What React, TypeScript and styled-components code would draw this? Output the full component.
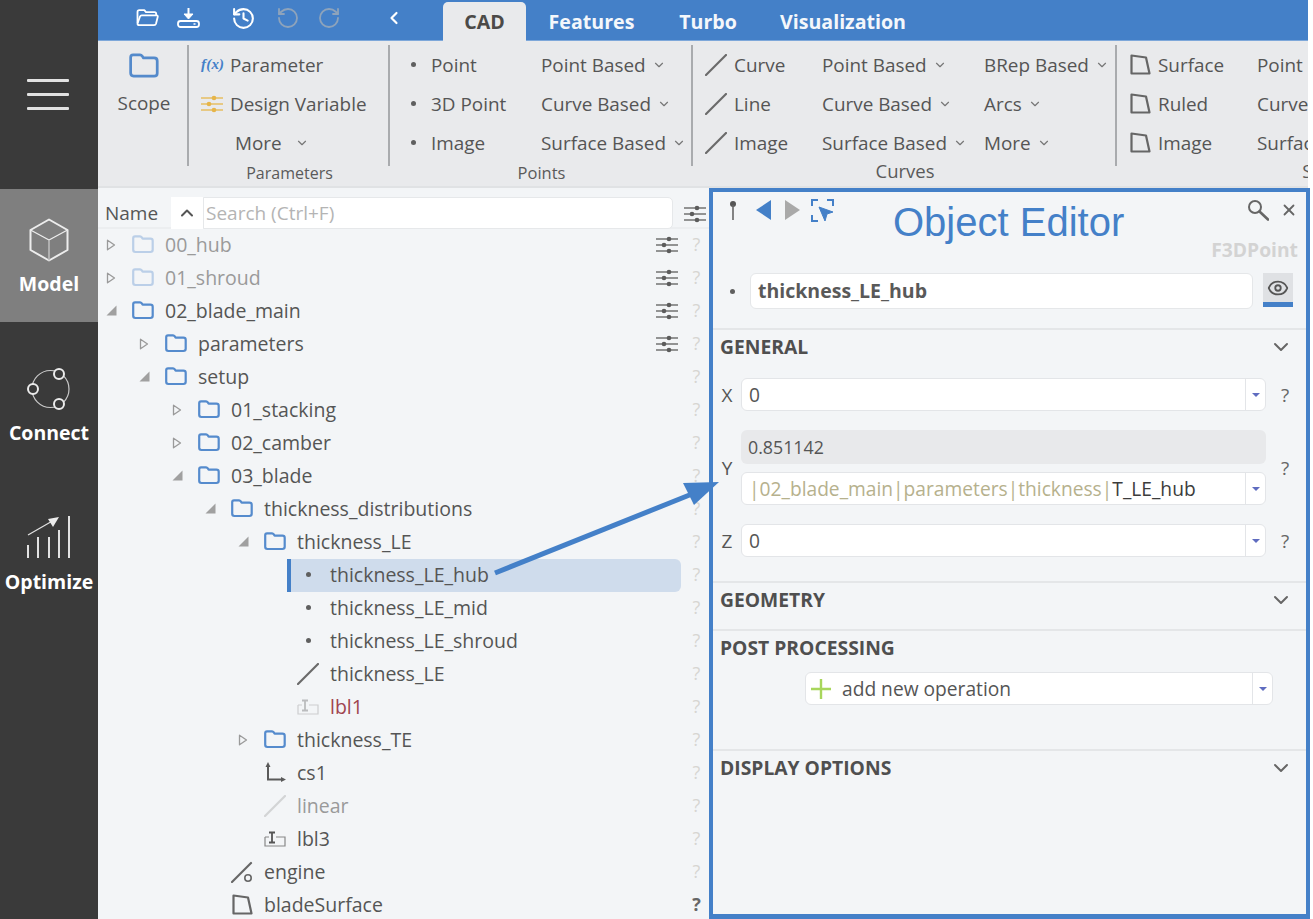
import React from "react";
import styled, { createGlobalStyle } from "styled-components";
import { ChevronDown, ChevronLeft, ChevronUp, Eye, History, RotateCcw, RotateCw, X } from "lucide-react";

const BLUE = "#4480c8";
const FONT = `"Open Sans", "Noto Sans", sans-serif`;

const Global = createGlobalStyle`
  html, body { margin: 0; padding: 0; height: 100%; overflow: hidden; background: #fff; }
  body { font-family: ${FONT}; color: #555; }
  * { box-sizing: border-box; }
`;

const Page = styled.div`
  position: relative;
  display: grid;
  grid-template-columns: 98px 1212px;
  width: 1310px;
  height: 919px;
  overflow: hidden;
`;

/* ---------- left rail ---------- */
const Rail = styled.nav`
  display: flex;
  flex-direction: column;
  gap: 16px;
  background: #3a3a3a;
  height: 919px;
`;
const RailTop = styled.div`
  height: 189px;
  margin-bottom: -16px;
  padding-top: 79px;
  padding-left: 27px;
  display: flex;
  flex-direction: column;
  gap: 11px;
`;
const BurgerLine = styled.span`
  display: block;
  width: 42px;
  height: 3px;
  background: #e2e2e2;
  border-radius: 1px;
`;
const RailItem = styled.div<{ $active?: boolean }>`
  height: 133px;
  padding-top: 29px;
  display: flex;
  flex-direction: column;
  align-items: center;
  gap: 10px;
  background: ${(p) => (p.$active ? "#7f7f7f" : "transparent")};
  color: #fff;
  font-size: 19.5px;
  font-weight: 700;
  line-height: 24px;
  svg { display: block; flex-shrink: 0; }
`;

/* ---------- main column ---------- */
const Main = styled.div`
  display: flex;
  flex-direction: column;
  min-width: 0;
  height: 919px;
`;
const TopBar = styled.header`
  display: flex;
  align-items: center;
  height: 41px;
  width: 1210px;
  background: ${BLUE};
  border-bottom: 1px solid #7ea8da;
`;
const QuickIcons = styled.div`
  display: flex;
  align-items: center;
  width: 345px;
  height: 40px;
  padding: 0 0 4px 37px;
`;
const QuickSlot = styled.span<{ $w: number }>`
  display: flex;
  justify-content: center;
  align-items: center;
  flex: 0 0 ${(p) => p.$w}px;
  color: #fff;
  svg { display: block; }
`;
const Tab = styled.div<{ $active?: boolean; $w: number }>`
  display: flex;
  justify-content: center;
  align-items: center;
  align-self: flex-end;
  width: ${(p) => p.$w}px;
  height: 39px;
  margin-bottom: -1px;
  font-size: 19.6px;
  font-weight: 700;
  color: ${(p) => (p.$active ? "#4c4a48" : "#f4f7fb")};
  background: ${(p) => (p.$active ? "#e9eaec" : "transparent")};
  border-radius: 5px 5px 0 0;
`;

const Ribbon = styled.section`
  display: flex;
  width: 1210px;
  height: 147px;
  flex-shrink: 0;
  background: #e9eaec;
  border-bottom: 2px solid #e0e2e4;
  overflow: hidden;
`;
const Group = styled.div<{ $w: number }>`
  flex: 0 0 ${(p) => p.$w}px;
  display: flex;
  flex-direction: column;
  padding-top: 4px;
`;
const GroupBody = styled.div<{ $cols: string; $pad: number; $sep?: boolean }>`
  display: grid;
  grid-template-columns: ${(p) => p.$cols};
  grid-auto-rows: 39px;
  padding: 0 0 0 ${(p) => p.$pad}px;
  height: 121px;
  border-right: ${(p) => (p.$sep === false ? "0" : "2px solid #a9abae")};
  align-content: start;
  white-space: nowrap;
`;
const Caption = styled.div<{ $size?: number; $lift?: number }>`
  text-align: center;
  font-size: ${(p) => p.$size ?? 16}px;
  line-height: 16px;
  margin-top: ${(p) => -1 - (p.$lift ?? 0)}px;
  color: #5a5a5a;
`;
const RibbonItem = styled.div<{ $indent?: number }>`
  display: flex;
  align-items: center;
  height: 39px;
  font-size: 18.9px;
  color: #555;
  padding-left: ${(p) => p.$indent ?? 0}px;
`;
const RibbonIcon = styled.span<{ $w: number }>`
  display: inline-flex;
  justify-content: flex-start;
  align-items: center;
  width: ${(p) => p.$w}px;
  flex-shrink: 0;
`;
const Dot = styled.span`
  display: inline-block;
  width: 5px;
  height: 5px;
  border-radius: 50%;
  background: #5f5f5f;
`;
const Caret = styled(ChevronDown)<{ $gap?: number }>`
  margin-left: ${(p) => p.$gap ?? 6}px;
  color: #777;
`;
const Fx = styled.span`
  font-family: "Liberation Serif", serif;
  font-style: italic;
  font-weight: 700;
  font-size: 15px;
  color: ${BLUE};
  letter-spacing: 0.2px;
`;
const ScopeCell = styled.div`
  grid-row: span 3;
  display: flex;
  flex-direction: column;
  align-items: center;
  padding-top: 8px;
  gap: 12px;
  font-size: 18.9px;
  color: #555;
  line-height: 26px;
  svg { display: block; flex-shrink: 0; }
`;

/* ---------- workspace ---------- */
const Work = styled.div`
  flex: 1;
  display: grid;
  grid-template-columns: 611px 601px;
  min-height: 0;
`;

const TreePanel = styled.div`
  background: #f3f5f7;
  overflow: hidden;
  height: 731px;
`;
const TreeHead = styled.div`
  display: flex;
  align-items: flex-start;
  height: 41px;
  border-bottom: 2px solid #eceef0;
  padding: 9px 0 0 7px;
  font-size: 19px;
`;
const HeadName = styled.span`
  width: 66px;
  line-height: 33px;
  color: #555;
`;
const SortButton = styled.span`
  display: flex;
  align-items: center;
  justify-content: center;
  width: 32px;
  height: 32px;
  background: #fff;
  color: #555;
`;
const SearchBox = styled.div`
  width: 470px;
  height: 32px;
  line-height: 30px;
  background: #fff;
  border: 1px solid #e6e8ea;
  border-radius: 0 5px 5px 0;
  padding-left: 2px;
  color: #b4b4b4;
  font-size: 19px;
`;
const HeadTool = styled.span`
  margin-left: 11px;
  margin-top: 8px;
  display: flex;
`;

const Row = styled.div`
  display: flex;
  height: 33px;
  font-size: 19.5px;
`;
const RowMain = styled.div<{ $depth: number; $selected?: boolean }>`
  flex: 1;
  display: flex;
  align-items: center;
  min-width: 0;
  white-space: nowrap;
  margin-left: ${(p) => (p.$selected ? 189 : 6 + p.$depth * 33)}px;
  padding-left: ${(p) => (p.$selected ? 6 : 0)}px;
  padding-right: 2px;
  padding-bottom: 2px;
  background: ${(p) => (p.$selected ? "#cfdcec" : "transparent")};
  border-left: ${(p) => (p.$selected ? `4px solid ${BLUE}` : "0")};
  border-radius: ${(p) => (p.$selected ? "0 6px 6px 0" : "0")};
`;
const ArrowSlot = styled.span`
  flex: 0 0 28px;
  display: flex;
  align-items: center;
  padding-left: 2px;
`;
const IconSlot = styled.span<{ $faded?: boolean }>`
  flex: 0 0 22px;
  display: flex;
  align-items: center;
  justify-content: center;
  margin-right: 11px;
  opacity: ${(p) => (p.$faded ? 0.35 : 1)};
`;
const RowName = styled.span<{ $tone?: "muted" | "alert" }>`
  flex: 1;
  color: ${(p) => (p.$tone === "muted" ? "#9a9a9a" : p.$tone === "alert" ? "#a0444f" : "#555")};
`;
const ToolSlot = styled.span`
  flex: 0 0 24px;
  display: flex;
  justify-content: center;
`;
const Help = styled.span<{ $strong?: boolean }>`
  flex: 0 0 28px;
  padding-left: 4px;
  padding-right: 1px;
  text-align: center;
  line-height: 31px;
  font-size: 18px;
  font-weight: ${(p) => (p.$strong ? 700 : 400)};
  color: ${(p) => (p.$strong ? "#666" : "#d7d5d2")};
`;

/* ---------- editor ---------- */
const Editor = styled.aside`
  background: #f3f5f7;
  border: 4px solid ${BLUE};
  border-bottom-width: 5px;
  height: 731px;
  overflow: hidden;
`;
const EditorHead = styled.div`
  height: 136px;
  display: flex;
  flex-direction: column;
`;
const EditorTools = styled.div`
  display: flex;
  align-items: center;
  height: 36px;
  padding-left: 15px;
  gap: 10px;
  svg { display: block; flex-shrink: 0; }
`;
const PinSlot = styled.span`
  display: flex;
  margin-right: 7px;
`;
const EditorToolsEnd = styled.span`
  margin-left: auto;
  display: flex;
  align-items: center;
  gap: 11px;
  padding-right: 8px;
  color: #666;
`;
const TypeTag = styled.div`
  height: 29px;
  margin-top: 7px;
  text-align: right;
  padding-right: 8px;
  font-size: 19.3px;
  font-weight: 700;
  color: #d3d3d3;
  line-height: 29px;
`;
const NameRow = styled.div`
  display: flex;
  align-items: flex-start;
  margin-top: 9px;
  padding-left: 17px;
`;
const NameDotSlot = styled.span`
  width: 20px;
  height: 36px;
  display: flex;
  align-items: center;
`;
const NameInput = styled.div`
  width: 503px;
  height: 36px;
  line-height: 34px;
  background: #fff;
  border: 1px solid #e5e7e9;
  border-radius: 6px;
  padding-left: 7px;
  font-size: 19.5px;
  font-weight: 700;
  color: #595959;
`;
const EyeButton = styled.span`
  width: 30px;
  height: 34px;
  margin-left: 10px;
  display: flex;
  align-items: center;
  justify-content: center;
  background: #dfe1e4;
  border-bottom: 5px solid ${BLUE};
  color: #555;
`;

const Section = styled.section<{ $h: number }>`
  height: ${(p) => p.$h}px;
  border-top: 2px solid #e4e6e8;
`;
const SectionHead = styled.div`
  display: flex;
  align-items: center;
  justify-content: space-between;
  height: 33px;
  padding: 0 13px 0 7px;
  font-size: 19.3px;
  font-weight: 700;
  color: #4f4f4f;
  line-height: 33px;
  text-transform: uppercase;
  svg { color: #666; }
`;
const FieldList = styled.div`
  display: flex;
  flex-direction: column;
  gap: 19px;
  margin-top: 15px;
`;
const FieldRow = styled.div`
  display: grid;
  grid-template-columns: 28px 525px 38px;
  align-items: center;
  font-size: 19px;
`;
const FieldLabel = styled.span`
  text-align: center;
  color: #555;
`;
const FieldStack = styled.div`
  display: flex;
  flex-direction: column;
  gap: 8px;
`;
const FieldHelp = styled.span`
  text-align: center;
  color: #666;
`;
const Combo = styled.div<{ $w?: number; $left?: number }>`
  display: flex;
  width: ${(p) => (p.$w ? `${p.$w}px` : "100%")};
  margin-left: ${(p) => p.$left ?? 0}px;
  height: 33px;
  background: #fff;
  border: 1px solid #e3e5e8;
  border-radius: 6px;
  font-size: 19.2px;
  color: #555;
`;
const ComboText = styled.div`
  flex: 1;
  display: flex;
  align-items: center;
  padding-left: 7px;
  white-space: nowrap;
  color: #555;
`;
const ComboButton = styled.span`
  flex: 0 0 20px;
  border-left: 1px solid #e3e5e8;
  display: flex;
  align-items: center;
  justify-content: center;
  &::before {
    content: "";
    border-left: 4px solid transparent;
    border-right: 4px solid transparent;
    border-top: 4px solid #5f6cc0;
  }
`;
const ReadOnly = styled.div`
  height: 34px;
  line-height: 34px;
  background: #e8e9eb;
  border-radius: 6px;
  padding-left: 7px;
  font-size: 17.8px;
  color: #555;
`;
const PathMuted = styled.span`
  color: #b6b18d;
`;
const PathStrong = styled.span`
  color: #3c3c3c;
`;
const PlusSlot = styled.span`
  display: flex;
  margin-right: 10px;
  margin-left: -3px;
`;
const AddList = styled.div`
  margin-top: 8px;
`;

/* ---------- annotation overlay ---------- */
const Annotation = styled.div`
  position: absolute;
  left: 893px;
  top: 198px;
  font-family: "Liberation Sans", Arial, sans-serif;
  font-size: 40px;
  line-height: 48px;
  color: ${BLUE};
  white-space: nowrap;
`;
const ArrowOverlay = styled.svg`
  position: absolute;
  left: 0;
  top: 0;
  width: 1310px;
  height: 919px;
  pointer-events: none;
`;

/* ---------- drawn icons ---------- */
const FolderIcon = ({ size = 22, stroke = 2.2 }: { size?: number; stroke?: number }) => (
  <svg width={size} height={size * 0.82} viewBox="0 0 22 18" fill="none">
    <path
      d="M1.200 5.600V3.200C1.200 2 2 1.300 3 1.300h5.100c.8 0 1.200.4 1.700 1.100l.8 1.200h7.800c1.500 0 2.300.9 2.300 2.200v9c0 1.400-.9 2.200-2.300 2.200H3.400C2 16.900 1.200 16 1.200 14.700V5.600z"
      stroke={BLUE}
      strokeOpacity={0.9}
      strokeWidth={stroke}
      strokeLinejoin="round"
    />
  </svg>
);
const ArrowOpen = () => (
  <svg width="10" height="12" viewBox="0 0 10 12" fill="none">
    <path d="M1.500 1.200 8.500 6 1.500 10.800z" stroke="#9a9a9a" strokeWidth="1.300" strokeLinejoin="round" />
  </svg>
);
const ArrowDown = () => (
  <svg width="11" height="11" viewBox="0 0 11 11">
    <path d="M10.500 .5v10H.5z" fill="#a0a0a0" />
  </svg>
);
const SlidersIcon = ({ color = "#5c5c5c" }: { color?: string }) => (
  <svg width="22" height="18" viewBox="0 0 22 18" fill="none">
    <path d="M0 3h22M0 9h22M0 15h22" stroke={color} strokeWidth="1.400" opacity="0.85" />
    <circle cx="13" cy="3" r="2.300" fill={color} />
    <circle cx="8" cy="9" r="2.300" fill={color} />
    <circle cx="13" cy="15" r="2.300" fill={color} />
  </svg>
);
const SlashIcon = ({ color = "#6a6a6a", w = 2.2 }: { color?: string; w?: number }) => (
  <svg width="22" height="22" viewBox="0 0 22 22" fill="none">
    <path d="M1 21 21 1" stroke={color} strokeWidth={w} strokeLinecap="round" />
  </svg>
);
const SurfaceIcon = ({ size = 21 }: { size?: number }) => (
  <svg width={size} height={size} viewBox="0 0 21 21" fill="none">
    <path d="M1.500 1.500 16 3.500 19.500 19.500H1.500z" stroke="#666" strokeWidth="2.200" strokeLinejoin="round" />
  </svg>
);
const LabelIcon = () => (
  <svg width="22" height="16" viewBox="0 0 22 16" fill="none">
    <path d="M1 6h4M12 6h9v9H1V6" stroke="#888" strokeWidth="1.200" />
    <path d="M5 1.500h6M8 1.500v10M5 11.500h6" stroke="#555" strokeWidth="1.800" />
  </svg>
);
const AxesIcon = () => (
  <svg width="22" height="22" viewBox="0 0 22 22" fill="none">
    <path d="M4 3v14.500h15" stroke="#5a5a5a" strokeWidth="2" />
    <path d="M4 0 1.500 5h5zM22 17.500 17 15v5z" fill="#5a5a5a" />
  </svg>
);
const EngineIcon = () => (
  <svg width="22" height="22" viewBox="0 0 22 22" fill="none">
    <path d="M1 21 20 2" stroke="#666" strokeWidth="2.200" strokeLinecap="round" />
    <circle cx="17" cy="17" r="3.200" stroke="#666" strokeWidth="1.600" />
  </svg>
);
const OpenFolder = () => (
  <svg width="23" height="18" viewBox="0 0 23 18" fill="none" stroke="#fff" strokeWidth="1.800" strokeLinejoin="round">
    <path d="M1.500 14V3c0-1 .7-1.800 1.800-1.800h5l1.700 2h8.500c1 0 1.700.7 1.700 1.700v1" />
    <path d="M1.500 14.500 4 7.500c.3-.8.900-1.200 1.700-1.200H20.500c1 0 1.500.8 1.200 1.700L20 14.800c-.3.900-1 1.400-1.900 1.400H3.300c-1 0-1.800-.7-1.800-1.700z" />
  </svg>
);
const SaveDrive = () => (
  <svg width="23" height="20" viewBox="0 0 23 20" fill="none" stroke="#fff">
    <path d="M11.500 0v9" strokeWidth="2" />
    <path d="M7 6l4.500 5L16 6z" fill="#fff" strokeWidth="1" />
    <rect x="1" y="13" width="21" height="6" rx="2.500" strokeWidth="1.800" />
    <path d="M16.500 16h2" strokeWidth="1.500" />
  </svg>
);
const PinIcon = () => (
  <svg width="10" height="22" viewBox="0 0 10 22">
    <circle cx="5" cy="5" r="3" fill="#555" />
    <path d="M5 6v15" stroke="#666" strokeWidth="1.600" />
  </svg>
);
const TriLeft = ({ color }: { color: string }) => (
  <svg width="18" height="22" viewBox="0 0 18 22">
    <path d="M16 1v20L1 11z" fill={color} />
  </svg>
);
const TriRight = ({ color }: { color: string }) => (
  <svg width="18" height="22" viewBox="0 0 18 22">
    <path d="M2 1v20l15-10z" fill={color} />
  </svg>
);
const SelectIcon = () => (
  <svg width="23" height="23" viewBox="0 0 23 23" fill="none" stroke={BLUE} strokeWidth="2">
    <path d="M1 7V1h6M16 1h6v6M1 16v6h6" />
    <path d="M8 8 22 13l-6 2-2 7z" fill={BLUE} strokeWidth="1" />
  </svg>
);
const SearchGlyph = () => (
  <svg width="22" height="22" viewBox="0 0 22 22" fill="none" stroke="#666">
    <circle cx="8" cy="8" r="6" strokeWidth="2" />
    <path d="M12.500 12.500 21 20.500" strokeWidth="2.600" strokeLinecap="round" />
  </svg>
);
const CubeIcon = () => (
  <svg width="40" height="44" viewBox="0 0 40 44" fill="none" stroke="#ededed" strokeLinejoin="round">
    <path d="M20 1.500 38.500 12v20L20 42.500 1.500 32V12z" strokeWidth="2" />
    <path d="M1.500 12 20 22l18.500-10" strokeWidth="1.300" />
    <path d="M20 22v20.500" strokeWidth="1.600" stroke="#bdbdbd" />
  </svg>
);
const ConnectIcon = () => (
  <svg width="44" height="44" viewBox="0 0 44 44" fill="none">
    <circle cx="23.500" cy="22" r="18.500" stroke="#c9c9c9" strokeWidth="1.200" />
    <circle cx="32" cy="7" r="5" fill="#3a3a3a" stroke="#ececec" strokeWidth="2" />
    <circle cx="6" cy="22" r="5" fill="#3a3a3a" stroke="#ececec" strokeWidth="2" />
    <circle cx="32" cy="37" r="5" fill="#3a3a3a" stroke="#ececec" strokeWidth="2" />
  </svg>
);
const OptimizeIcon = () => (
  <svg width="46" height="44" viewBox="0 0 46 44" fill="none" stroke="#e2e2e2">
    <path d="M2 19 29 3.500" strokeWidth="1.200" />
    <path d="M33 1 22 3l5 8z" fill="#ececec" strokeWidth="0" />
    <path d="M2 29v13M12 21v21M23 21v21M33 14v28M43 0v42" strokeWidth="2" />
  </svg>
);
const PlusIcon = () => (
  <svg width="22" height="22" viewBox="0 0 22 22">
    <path d="M11 1v20M1 11h20" stroke="#a8d65c" strokeWidth="2.400" />
  </svg>
);

/* ---------- data ---------- */
type Kind = "folder" | "dot" | "slash" | "label" | "axes" | "engine" | "surface";
interface TreeRow {
  name: string;
  depth: number;
  kind: Kind;
  arrow?: "open" | "down";
  faded?: boolean;
  tone?: "muted" | "alert";
  tools?: boolean;
  selected?: boolean;
  strongHelp?: boolean;
}
const rows: TreeRow[] = [
  { name: "00_hub", depth: 0, kind: "folder", arrow: "open", faded: true, tone: "muted", tools: true },
  { name: "01_shroud", depth: 0, kind: "folder", arrow: "open", faded: true, tone: "muted", tools: true },
  { name: "02_blade_main", depth: 0, kind: "folder", arrow: "down", tools: true },
  { name: "parameters", depth: 1, kind: "folder", arrow: "open", tools: true },
  { name: "setup", depth: 1, kind: "folder", arrow: "down" },
  { name: "01_stacking", depth: 2, kind: "folder", arrow: "open" },
  { name: "02_camber", depth: 2, kind: "folder", arrow: "open" },
  { name: "03_blade", depth: 2, kind: "folder", arrow: "down" },
  { name: "thickness_distributions", depth: 3, kind: "folder", arrow: "down" },
  { name: "thickness_LE", depth: 4, kind: "folder", arrow: "down" },
  { name: "thickness_LE_hub", depth: 5, kind: "dot", selected: true },
  { name: "thickness_LE_mid", depth: 5, kind: "dot" },
  { name: "thickness_LE_shroud", depth: 5, kind: "dot" },
  { name: "thickness_LE", depth: 5, kind: "slash" },
  { name: "lbl1", depth: 5, kind: "label", faded: true, tone: "alert" },
  { name: "thickness_TE", depth: 4, kind: "folder", arrow: "open" },
  { name: "cs1", depth: 4, kind: "axes" },
  { name: "linear", depth: 4, kind: "slash", faded: true, tone: "muted" },
  { name: "lbl3", depth: 4, kind: "label" },
  { name: "engine", depth: 3, kind: "engine" },
  { name: "bladeSurface", depth: 3, kind: "surface", strongHelp: true },
];

const kindIcon = (r: TreeRow) => {
  switch (r.kind) {
    case "folder": return <FolderIcon />;
    case "dot": return <Dot />;
    case "slash": return <SlashIcon color={r.faded ? "#999" : "#6a6a6a"} />;
    case "label": return <LabelIcon />;
    case "axes": return <AxesIcon />;
    case "engine": return <EngineIcon />;
    case "surface": return <SurfaceIcon />;
  }
};

const More = ({ children, indent, gap }: { children: React.ReactNode; indent?: number; gap?: number }) => (
  <RibbonItem $indent={indent}>
    {children}
    <Caret size={14} strokeWidth={2} $gap={gap} />
  </RibbonItem>
);
const Iconed = ({ icon, w, children }: { icon: React.ReactNode; w: number; children: React.ReactNode }) => (
  <RibbonItem>
    <RibbonIcon $w={w}>{icon}</RibbonIcon>
    {children}
  </RibbonItem>
);

const Field = ({ label, children }: { label: string; children: React.ReactNode }) => (
  <FieldRow>
    <FieldLabel>{label}</FieldLabel>
    {children}
    <FieldHelp>?</FieldHelp>
  </FieldRow>
);

export default function App() {
  return (
    <Page>
      <Global />
      <Rail>
        <RailTop>
          <BurgerLine />
          <BurgerLine />
          <BurgerLine />
        </RailTop>
        <RailItem $active>
          <CubeIcon />
          Model
        </RailItem>
        <RailItem>
          <ConnectIcon />
          Connect
        </RailItem>
        <RailItem>
          <OptimizeIcon />
          Optimize
        </RailItem>
      </Rail>

      <Main>
        <TopBar>
          <QuickIcons>
            <QuickSlot $w={24}><OpenFolder /></QuickSlot>
            <QuickSlot $w={58}><SaveDrive /></QuickSlot>
            <QuickSlot $w={52}><History size={25} strokeWidth={2} /></QuickSlot>
            <QuickSlot $w={38}><RotateCcw size={24} strokeWidth={1.8} color="#8ea3bb" /></QuickSlot>
            <QuickSlot $w={44}><RotateCw size={24} strokeWidth={1.8} color="#8ea3bb" /></QuickSlot>
            <QuickSlot $w={86}><ChevronLeft size={20} strokeWidth={2.6} /></QuickSlot>
          </QuickIcons>
          <Tab $active $w={83}>CAD</Tab>
          <Tab $w={131}>Features</Tab>
          <Tab $w={102}>Turbo</Tab>
          <Tab $w={168}>Visualization</Tab>
        </TopBar>

        <Ribbon>
          <Group $w={91}>
            <GroupBody $cols="84px" $pad={4}>
              <ScopeCell>
                <FolderIcon size={30} stroke={2} />
                Scope
              </ScopeCell>
            </GroupBody>
          </Group>
          <Group $w={201}>
            <GroupBody $cols="1fr" $pad={12}>
              <Iconed w={29} icon={<Fx>f(x)</Fx>}>Parameter</Iconed>
              <Iconed w={29} icon={<SlidersIcon color="#e6b54a" />}>Design Variable</Iconed>
              <More indent={34} gap={13}>More</More>
            </GroupBody>
            <Caption>Parameters</Caption>
          </Group>
          <Group $w={303}>
            <GroupBody $cols="130px 1fr" $pad={21}>
              <Iconed w={20} icon={<Dot />}>Point</Iconed>
              <More>Point Based</More>
              <Iconed w={20} icon={<Dot />}>3D Point</Iconed>
              <More>Curve Based</More>
              <Iconed w={20} icon={<Dot />}>Image</Iconed>
              <More>Surface Based</More>
            </GroupBody>
            <Caption $size={16.5}>Points</Caption>
          </Group>
          <Group $w={424}>
            <GroupBody $cols="117px 162px 1fr" $pad={12}>
              <Iconed w={29} icon={<SlashIcon />}>Curve</Iconed>
              <More>Point Based</More>
              <More>BRep Based</More>
              <Iconed w={29} icon={<SlashIcon />}>Line</Iconed>
              <More>Curve Based</More>
              <More>Arcs</More>
              <Iconed w={29} icon={<SlashIcon />}>Image</Iconed>
              <More>Surface Based</More>
              <More>More</More>
            </GroupBody>
            <Caption $size={18.5} $lift={2}>Curves</Caption>
          </Group>
          <Group $w={444}>
            <GroupBody $cols="127px 1fr" $pad={13} $sep={false}>
              <Iconed w={28} icon={<SurfaceIcon />}>Surface</Iconed>
              <More>Point Based</More>
              <Iconed w={28} icon={<SurfaceIcon />}>Ruled</Iconed>
              <More>Curve Based</More>
              <Iconed w={28} icon={<SurfaceIcon />}>Image</Iconed>
              <More>Surface Based</More>
            </GroupBody>
            <Caption $size={18.5} $lift={2}>Surfaces</Caption>
          </Group>
        </Ribbon>

        <Work>
          <TreePanel>
            <TreeHead>
              <HeadName>Name</HeadName>
              <SortButton><ChevronUp size={20} strokeWidth={2.4} /></SortButton>
              <SearchBox>Search (Ctrl+F)</SearchBox>
              <HeadTool><SlidersIcon /></HeadTool>
            </TreeHead>
            {rows.map((r, i) => (
              <Row key={i}>
                <RowMain $depth={r.depth} $selected={r.selected}>
                  {!r.selected && (
                    <ArrowSlot>
                      {r.arrow === "open" && <ArrowOpen />}
                      {r.arrow === "down" && <ArrowDown />}
                    </ArrowSlot>
                  )}
                  <IconSlot $faded={r.faded}>{kindIcon(r)}</IconSlot>
                  <RowName $tone={r.tone}>{r.name}</RowName>
                  {r.tools && <ToolSlot><SlidersIcon /></ToolSlot>}
                </RowMain>
                <Help $strong={r.strongHelp}>?</Help>
              </Row>
            ))}
          </TreePanel>

          <Editor>
            <EditorHead>
              <EditorTools>
                <PinSlot><PinIcon /></PinSlot>
                <TriLeft color={BLUE} />
                <TriRight color="#a9a9a9" />
                <SelectIcon />
                <EditorToolsEnd>
                  <SearchGlyph />
                  <X size={18} strokeWidth={2.4} />
                </EditorToolsEnd>
              </EditorTools>
              <TypeTag>F3DPoint</TypeTag>
              <NameRow>
                <NameDotSlot><Dot /></NameDotSlot>
                <NameInput>thickness_LE_hub</NameInput>
                <EyeButton><Eye size={22} strokeWidth={2} /></EyeButton>
              </NameRow>
            </EditorHead>

            <Section $h={253}>
              <SectionHead>General<ChevronDown size={24} strokeWidth={2} /></SectionHead>
              <FieldList>
                <Field label="X">
                  <Combo><ComboText>0</ComboText><ComboButton /></Combo>
                </Field>
                <Field label="Y">
                  <FieldStack>
                    <ReadOnly>0.851142</ReadOnly>
                    <Combo>
                      <ComboText>
                        <PathMuted>|02_blade_main|parameters|thickness|</PathMuted>
                        <PathStrong>T_LE_hub</PathStrong>
                      </ComboText>
                      <ComboButton />
                    </Combo>
                  </FieldStack>
                </Field>
                <Field label="Z">
                  <Combo><ComboText>0</ComboText><ComboButton /></Combo>
                </Field>
              </FieldList>
            </Section>

            <Section $h={48}>
              <SectionHead>Geometry<ChevronDown size={24} strokeWidth={2} /></SectionHead>
            </Section>

            <Section $h={120}>
              <SectionHead>Post Processing</SectionHead>
              <AddList>
                <Combo $w={468} $left={92}>
                  <ComboText>
                    <PlusSlot><PlusIcon /></PlusSlot>
                    add new operation
                  </ComboText>
                  <ComboButton />
                </Combo>
              </AddList>
            </Section>

            <Section $h={100}>
              <SectionHead>Display Options<ChevronDown size={24} strokeWidth={2} /></SectionHead>
            </Section>
          </Editor>
        </Work>
      </Main>

      <Annotation>Object Editor</Annotation>
      <ArrowOverlay viewBox="0 0 1310 919">
        <path d="M495 573 692 494" stroke={BLUE} strokeWidth="5" />
        <path d="M719 482 683 483 694 505z" fill={BLUE} />
      </ArrowOverlay>
    </Page>
  );
}
